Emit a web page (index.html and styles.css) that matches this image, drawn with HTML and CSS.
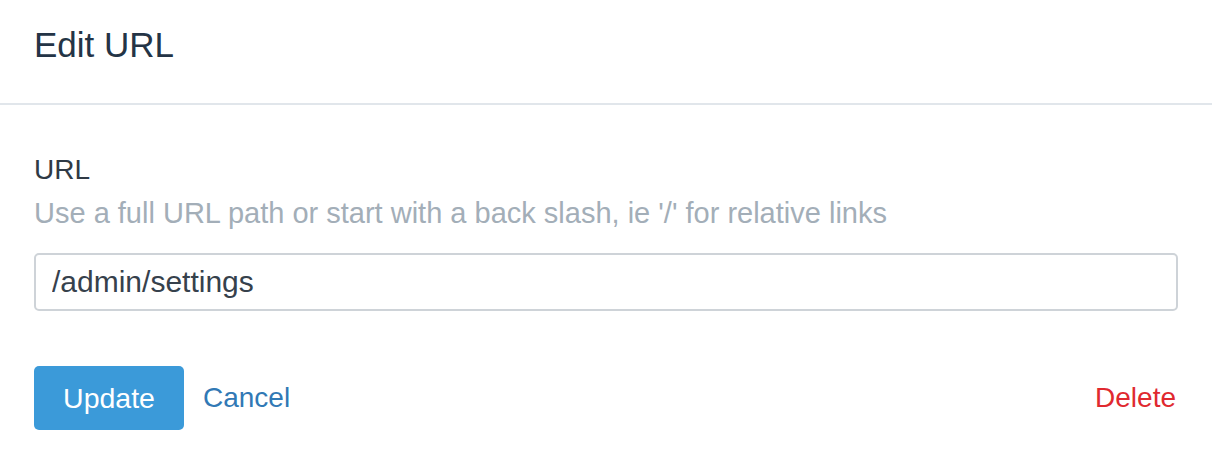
FILE: index.html
```html
<!DOCTYPE html>
<html lang="en">
<head>
<meta charset="utf-8">
<title>Edit URL</title>
<link rel="stylesheet" href="styles.css">
</head>
<body>
  <div class="modal">
    <div class="modal-header">
      <h1 class="modal-title">Edit URL</h1>
    </div>
    <div class="modal-body">
      <label class="field-label" for="url">URL</label>
      <p class="field-help">Use a full URL path or start with a back slash, ie '/' for relative links</p>
      <input class="field-input" id="url" type="text" value="/admin/settings">
      <div class="actions">
        <div class="actions-left">
          <button class="btn-primary" type="button">Update</button>
          <a class="link-cancel" href="#">Cancel</a>
        </div>
        <a class="link-delete" href="#">Delete</a>
      </div>
    </div>
  </div>
</body>
</html>
```
FILE: styles.css
```css
html, body {
  margin: 0;
  padding: 0;
  background: #ffffff;
}

body {
  font-family: "Liberation Sans", Arial, sans-serif;
  width: 1212px;
  height: 454px;
  overflow: hidden;
}

.modal-header {
  padding: 25px 34px 38px;
  border-bottom: 2px solid #e1e6eb;
}

.modal-title {
  margin: 0;
  font-size: 35px;
  line-height: 40px;
  font-weight: 400;
  color: #243446;
}

.modal-body {
  padding: 49px 34px 0;
  display: flex;
  flex-direction: column;
}

.field-label {
  font-size: 28px;
  line-height: 32px;
  color: #2f3a45;
}

.field-help {
  margin: 10px 0 0;
  font-size: 29px;
  line-height: 34px;
  color: #a3aeb8;
}

.field-input {
  margin-top: 23px;
  box-sizing: border-box;
  width: 100%;
  height: 58px;
  padding: 0 16px;
  border: 2px solid #ced3d8;
  border-radius: 5px;
  font-family: "Liberation Sans", Arial, sans-serif;
  font-size: 30px;
  color: #36414c;
  background: #ffffff;
  outline: none;
}

.actions {
  margin-top: 55px;
  display: flex;
  align-items: center;
  justify-content: space-between;
}

.actions-left {
  display: flex;
  align-items: center;
  gap: 19px;
}

.btn-primary {
  width: 150px;
  height: 64px;
  border: none;
  border-radius: 5px;
  background: #3b9ad9;
  color: #ffffff;
  font-family: "Liberation Sans", Arial, sans-serif;
  font-size: 28.5px;
  padding: 0;
  cursor: pointer;
}

.link-cancel {
  font-size: 28px;
  color: #3179b5;
  text-decoration: none;
}

.link-delete {
  font-size: 28px;
  color: #e0292f;
  text-decoration: none;
  margin-right: 2px;
}
```
